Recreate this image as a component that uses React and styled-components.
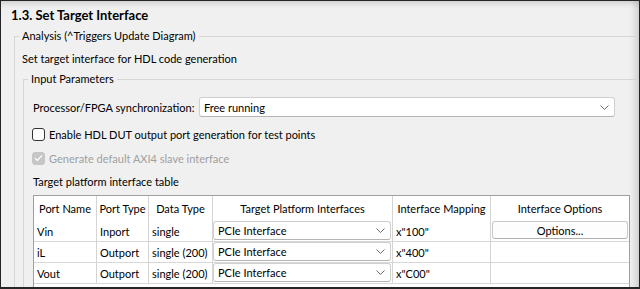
import React from 'react';
import styled, { createGlobalStyle } from 'styled-components';

const Global = createGlobalStyle`
  html, body { margin: 0; padding: 0; background: #f0f0f0; }
  body { font-family: Lato, "Noto Sans", sans-serif; font-size: 11px; color: #000; }
  * { box-sizing: border-box; }
`;

const Frame = styled.div`
  width: 640px;
  height: 289px;
  overflow: hidden;
  border: 1px solid #262626;
  border-bottom-width: 2px;
  background: #f0f0f0;
  white-space: nowrap;
  box-shadow: inset 0 7px 6px -5px rgba(0, 0, 0, 0.16), inset -9px 0 7px -6px rgba(0, 0, 0, 0.16);
`;

const Title = styled.h1`
  margin: 6px 0 0 10px;
  font-size: 13px;
  font-weight: 700;
  line-height: 16px;
`;

const Group = styled.section`
  margin: ${(p) => p.$top}px 0 0 ${(p) => p.$left}px;
  border-top: 1px solid #d6d6d6;
  border-left: 1px solid #d6d6d6;
  padding-left: ${(p) => p.$pad}px;
`;

const Legend = styled.h2`
  width: fit-content;
  margin: -9px 0 0 ${(p) => p.$shift}px;
  padding: 0 3px;
  background: #f0f0f0;
  font-size: 11px;
  font-weight: 400;
  line-height: 16px;
`;

const Text = styled.p`
  margin: ${(p) => p.$top}px 0 0 0;
  line-height: 16px;
  color: ${(p) => (p.$disabled ? '#a0a0a0' : '#000')};
`;

const FieldRow = styled.div`
  display: flex;
  align-items: center;
  margin-top: 10px;
  height: 20px;
`;

const Label = styled.span`
  width: 166px;
  flex: none;
`;

const Select = styled.div`
  display: flex;
  align-items: center;
  justify-content: space-between;
  width: ${(p) => p.$width}px;
  height: ${(p) => p.$height}px;
  padding: 0 5px 0 4px;
  background: #fff;
  border: 1px solid #cfcfcf;
  border-bottom-color: #b4b4b4;
  border-radius: 3px;
`;

const CheckRow = styled.label`
  display: flex;
  align-items: center;
  gap: 4px;
  height: 16px;
  margin-top: ${(p) => p.$top}px;
  margin-left: -1px;
  color: ${(p) => (p.$disabled ? '#a0a0a0' : '#000')};
`;

const Box = styled.span`
  width: 13px;
  height: 13px;
  flex: none;
  display: flex;
  align-items: center;
  justify-content: center;
  border-radius: 3px;
  border: 1px solid ${(p) => (p.$checked ? '#c6c6c6' : '#333')};
  background: ${(p) => (p.$checked ? '#c6c6c6' : '#fff')};
`;

const TableBox = styled.div`
  margin-top: 5px;
  width: 597px;
  height: 130px;
  background: #fff;
  border: 1px solid #a0a0a0;
`;

const Table = styled.table`
  border-collapse: separate;
  border-spacing: 0;
  table-layout: fixed;
  width: 595px;
  font-size: 11px;
`;

const Th = styled.th`
  height: 25px;
  padding: 0;
  font-weight: 400;
  text-align: center;
  border-right: ${(p) => (p.$last ? 'none' : '1px solid #d4d4d4')};
  overflow: hidden;
`;

const Td = styled.td`
  height: 21px;
  padding: ${(p) => (p.$control ? '0 1px 1px 0' : '0 3px')};
  text-align: left;
  vertical-align: ${(p) => (p.$control ? 'top' : 'middle')};
  border-right: ${(p) => (p.$last ? 'none' : '1px solid #d4d4d4')};
  border-bottom: 1px solid #d8d8d8;
  overflow: hidden;
`;

const CellPad = styled.div`
  padding-left: ${(p) => p.$left}px;
`;

const Button = styled.button`
  display: block;
  width: 136px;
  height: 18px;
  padding: 0;
  font: inherit;
  color: #000;
  background: #fdfdfd;
  border: 1px solid #c8c8c8;
  border-bottom-color: #b0b0b0;
  border-radius: 3px;
`;

const Chevron = () => (
  <svg width="9" height="5" viewBox="0 0 9 5">
    <polyline points="0.5,0.5 4.5,4.5 8.5,0.5" fill="none" stroke="#6a6a6a" strokeWidth="1" />
  </svg>
);

const Check = () => (
  <svg width="9" height="8" viewBox="0 0 9 8">
    <polyline points="1,4.2 3.4,6.4 8,1.4" fill="none" stroke="#fff" strokeWidth="1.3" />
  </svg>
);

const rows = [
  { name: 'Vin', type: 'Inport', data: 'single', map: 'x"100"', options: true },
  { name: 'iL', type: 'Outport', data: 'single (200)', map: 'x"400"' },
  { name: 'Vout', type: 'Outport', data: 'single (200)', map: 'x"C00"' },
];

export default function App() {
  return (
    <>
      <Global />
      <Frame>
        <Title>1.3. Set Target Interface</Title>
        <Group $top={13} $left={13} $pad={7}>
          <Legend $shift={-3}>Analysis (^Triggers Update Diagram)</Legend>
          <Text $top={7}>Set target interface for HDL code generation</Text>
          <Group $top={12} $left={1} $pad={9}>
            <Legend $shift={-5}>Input Parameters</Legend>
            <FieldRow>
              <Label>Processor/FPGA synchronization:</Label>
              <Select $width={416} $height={20}>
                <span>Free running</span>
                <Chevron />
              </Select>
            </FieldRow>
            <CheckRow $top={9}>
              <Box />
              <span>Enable HDL DUT output port generation for test points</span>
            </CheckRow>
            <CheckRow $top={8} $disabled>
              <Box $checked>
                <Check />
              </Box>
              <span>Generate default AXI4 slave interface</span>
            </CheckRow>
            <Text $top={8}>Target platform interface table</Text>
            <TableBox>
              <Table>
                <colgroup>
                  <col style={{ width: 63 }} />
                  <col style={{ width: 52 }} />
                  <col style={{ width: 64 }} />
                  <col style={{ width: 180 }} />
                  <col style={{ width: 98 }} />
                  <col style={{ width: 138 }} />
                </colgroup>
                <thead>
                  <tr>
                    <Th>Port Name</Th>
                    <Th>Port Type</Th>
                    <Th>Data Type</Th>
                    <Th>Target Platform Interfaces</Th>
                    <Th>Interface Mapping</Th>
                    <Th $last>Interface Options</Th>
                  </tr>
                </thead>
                <tbody>
                  {rows.map((r) => (
                    <tr key={r.name}>
                      <Td>{r.name}</Td>
                      <Td>{r.type}</Td>
                      <Td>{r.data}</Td>
                      <Td $control>
                        <Select $width={178} $height={19}>
                          <span>PCIe Interface</span>
                          <Chevron />
                        </Select>
                      </Td>
                      <Td>{r.map}</Td>
                      <Td $control $last>
                        {r.options && (
                          <CellPad $left={1}>
                            <Button type="button">Options...</Button>
                          </CellPad>
                        )}
                      </Td>
                    </tr>
                  ))}
                </tbody>
              </Table>
            </TableBox>
          </Group>
        </Group>
      </Frame>
    </>
  );
}
